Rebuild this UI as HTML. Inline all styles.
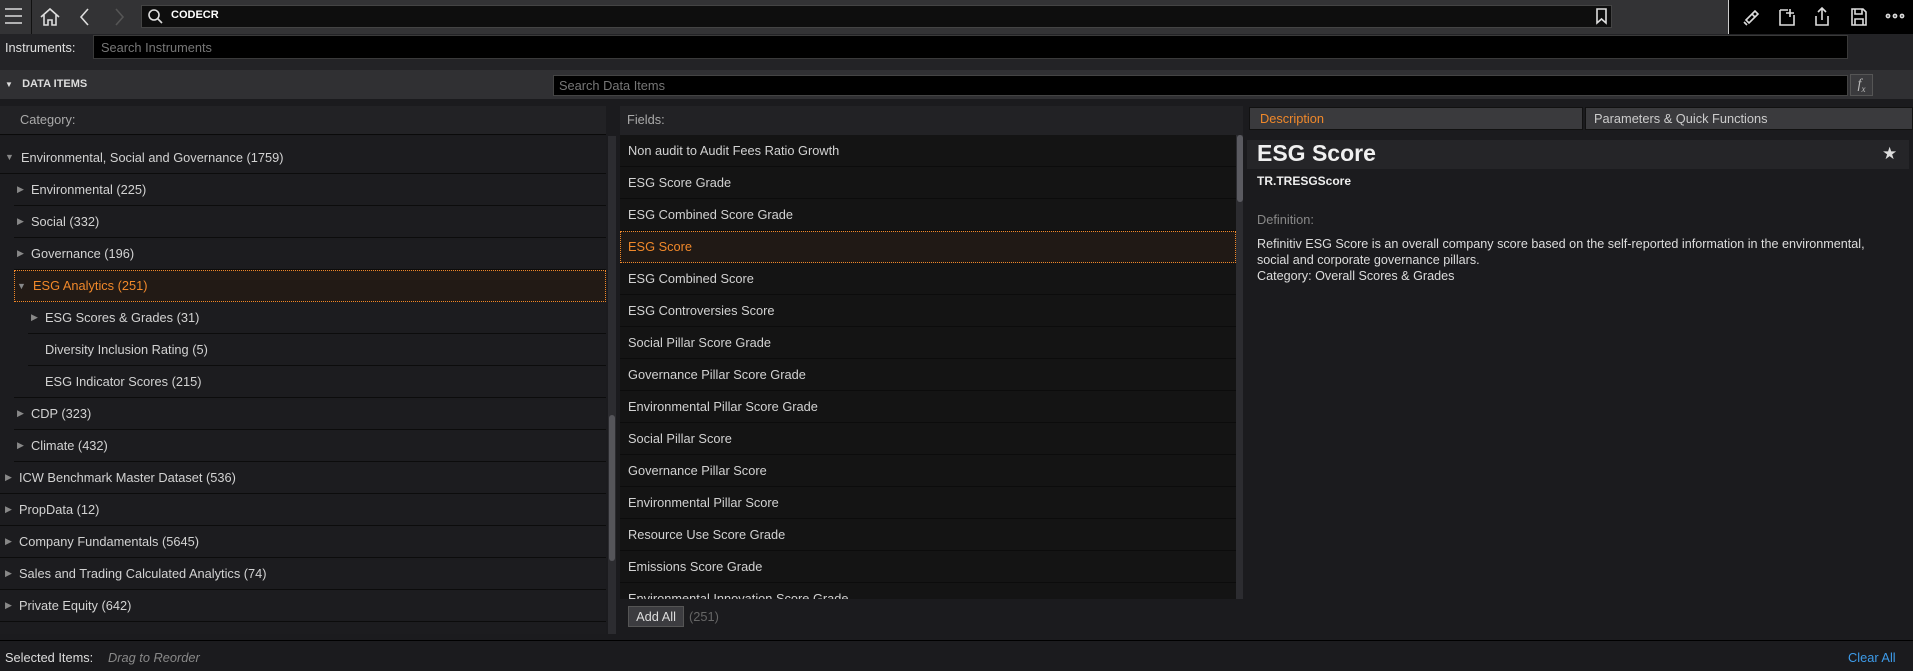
<!DOCTYPE html>
<html><head><meta charset="utf-8"><style>
*{margin:0;padding:0;box-sizing:border-box}
body{width:1913px;height:671px;background:#1b1b1e;font-family:"Liberation Sans",sans-serif;font-size:12.8px;color:#d2d2d2;position:relative;overflow:hidden}
.a{position:absolute}
.row{position:absolute;height:32px;line-height:31px;border-bottom:1px solid #0c0c0c;white-space:nowrap}
.tri{position:absolute;top:0;font-size:9px;color:#888}
.f{left:620px;width:616px;padding-left:8px;background:#141414}
</style></head><body>
<!-- top bar -->
<div class="a" style="left:0;top:0;width:1728px;height:34px;background:#333335"></div>
<div class="a" style="left:1728px;top:0;width:185px;height:34px;background:#000;border-left:1px solid #ccc"></div>
<div class="a" style="left:31px;top:0;width:1px;height:34px;background:#111"></div>
<div class="a" style="left:141px;top:5px;width:1471px;height:23px;background:#0e0e0e;border:1px solid #444"></div>
<div class="a" style="left:171px;top:9px;font-size:11px;font-weight:bold;color:#fff">CODECR</div>
<!-- instruments -->
<div class="a" style="left:0;top:34px;width:1913px;height:36px;background:#232326"></div>
<div class="a" style="left:5px;top:40px;color:#e0e0e0">Instruments:</div>
<div class="a" style="left:93px;top:35px;width:1755px;height:24px;background:#000;border:1px solid #3a3a3a;padding:4px 7px;color:#777">Search Instruments</div>
<!-- data items -->
<div class="a" style="left:0;top:70px;width:1913px;height:29px;background:#303033"></div>
<div class="a" style="left:5px;top:78px;font-size:11px;font-weight:bold;color:#ddd"><span style="font-size:8px">▼</span>&nbsp;&nbsp;&nbsp;DATA ITEMS</div>
<div class="a" style="left:553px;top:75px;width:1295px;height:21px;background:#000;border:1px solid #444;padding:2px 5px;color:#777">Search Data Items</div>
<div class="a" style="left:1850px;top:74px;width:23px;height:22px;background:#3a3a3d;border:1px solid #555;color:#bbb;font-family:'Liberation Serif',serif;font-style:italic;font-size:14px;text-align:center;line-height:20px">f<sub style="font-size:9px">x</sub></div>
<!-- category -->
<div class="a" style="left:0;top:106px;width:606px;height:29px;background:#222225;border-bottom:1px solid #0a0a0a;padding:6px 20px;color:#aaa">Category:</div>
<div class="a" style="left:0;top:136px;width:606px;height:498px;background:#1c1c1f"></div>
<div class="row" style="left:0;top:142px;width:606px"><span class="tri" style="left:5px">▼</span><span style="margin-left:21px">Environmental, Social and Governance (1759)</span></div>
<div class="row" style="left:14px;top:174px;width:592px"><span class="tri" style="left:3px">▶</span><span style="margin-left:17px">Environmental (225)</span></div>
<div class="row" style="left:14px;top:206px;width:592px"><span class="tri" style="left:3px">▶</span><span style="margin-left:17px">Social (332)</span></div>
<div class="row" style="left:14px;top:238px;width:592px"><span class="tri" style="left:3px">▶</span><span style="margin-left:17px">Governance (196)</span></div>
<div class="row" style="left:14px;top:270px;width:592px;background:#221a15;border:1px dotted #f0882a;line-height:30px;color:#f0882a"><span class="tri" style="left:2px">▼</span><span style="margin-left:18px">ESG Analytics (251)</span></div>
<div class="row" style="left:28px;top:302px;width:578px"><span class="tri" style="left:3px">▶</span><span style="margin-left:17px">ESG Scores &amp; Grades (31)</span></div>
<div class="row" style="left:28px;top:334px;width:578px"><span style="margin-left:17px">Diversity Inclusion Rating (5)</span></div>
<div class="row" style="left:14px;top:366px;width:592px"><span style="margin-left:31px">ESG Indicator Scores (215)</span></div>
<div class="row" style="left:14px;top:398px;width:592px"><span class="tri" style="left:3px">▶</span><span style="margin-left:17px">CDP (323)</span></div>
<div class="row" style="left:14px;top:430px;width:592px"><span class="tri" style="left:3px">▶</span><span style="margin-left:17px">Climate (432)</span></div>
<div class="row" style="left:0;top:462px;width:606px"><span class="tri" style="left:5px">▶</span><span style="margin-left:19px">ICW Benchmark Master Dataset (536)</span></div>
<div class="row" style="left:0;top:494px;width:606px"><span class="tri" style="left:5px">▶</span><span style="margin-left:19px">PropData (12)</span></div>
<div class="row" style="left:0;top:526px;width:606px"><span class="tri" style="left:5px">▶</span><span style="margin-left:19px">Company Fundamentals (5645)</span></div>
<div class="row" style="left:0;top:558px;width:606px"><span class="tri" style="left:5px">▶</span><span style="margin-left:19px">Sales and Trading Calculated Analytics (74)</span></div>
<div class="row" style="left:0;top:590px;width:606px"><span class="tri" style="left:5px">▶</span><span style="margin-left:19px">Private Equity (642)</span></div>
<div class="a" style="left:608px;top:136px;width:8px;height:498px;background:#2c2c30"></div>
<div class="a" style="left:609px;top:415px;width:6px;height:146px;background:#55555a;border-radius:3px"></div>
<!-- fields -->
<div class="a" style="left:620px;top:106px;width:623px;height:29px;background:#222225;padding:6px 7px;color:#aaa">Fields:</div>
<div class="a" style="left:620px;top:135px;width:616px;height:464px;background:#141414"></div>
<div class="row f" style="top:135px">Non audit to Audit Fees Ratio Growth</div>
<div class="row f" style="top:167px">ESG Score Grade</div>
<div class="row f" style="top:199px">ESG Combined Score Grade</div>
<div class="row f" style="top:231px;background:#201915;border:1px dotted #f0882a;color:#f0882a;padding-left:7px;line-height:30px">ESG Score</div>
<div class="row f" style="top:263px">ESG Combined Score</div>
<div class="row f" style="top:295px">ESG Controversies Score</div>
<div class="row f" style="top:327px">Social Pillar Score Grade</div>
<div class="row f" style="top:359px">Governance Pillar Score Grade</div>
<div class="row f" style="top:391px">Environmental Pillar Score Grade</div>
<div class="row f" style="top:423px">Social Pillar Score</div>
<div class="row f" style="top:455px">Governance Pillar Score</div>
<div class="row f" style="top:487px">Environmental Pillar Score</div>
<div class="row f" style="top:519px">Resource Use Score Grade</div>
<div class="row f" style="top:551px">Emissions Score Grade</div>
<div class="a" style="left:620px;top:583px;width:616px;height:16px;background:#141414;overflow:hidden"><div style="padding-left:8px;line-height:31px">Environmental Innovation Score Grade</div></div>
<div class="a" style="left:1236px;top:135px;width:7px;height:464px;background:#2c2c30"></div>
<div class="a" style="left:1237px;top:135px;width:6px;height:67px;background:#5a5a60;border-radius:3px"></div>
<div class="a" style="left:628px;top:606px;width:56px;height:21px;background:#3c3c40;border:1px solid #555;color:#ddd;text-align:center;line-height:19px">Add All</div>
<div class="a" style="left:689px;top:609px;color:#666">(251)</div>
<!-- description -->
<div class="a" style="left:1249px;top:107px;width:334px;height:23px;background:#3a3a3d;border:1px solid #111;padding:3px 10px;color:#f0882a">Description</div>
<div class="a" style="left:1585px;top:107px;width:328px;height:23px;background:#3a3a3d;border:1px solid #111;padding:3px 8px;color:#ccc">Parameters &amp; Quick Functions</div>
<div class="a" style="left:1247px;top:140px;width:662px;height:29px;background:#252528"></div>
<div class="a" style="left:1257px;top:140px;font-size:23px;font-weight:bold;color:#f0f0f0">ESG Score</div>
<div class="a" style="left:1882px;top:144px;font-size:17px;color:#ddd">★</div>
<div class="a" style="left:1257px;top:174px;font-size:12px;font-weight:bold;color:#eee">TR.TRESGScore</div>
<div class="a" style="left:1257px;top:212px;color:#888">Definition:</div>
<div class="a" style="left:1257px;top:236px;line-height:16px;font-size:12.6px;color:#ddd">Refinitiv ESG Score is an overall company score based on the self-reported information in the environmental,<br>social and corporate governance pillars.<br>Category: Overall Scores &amp; Grades</div>
<!-- bottom -->
<div class="a" style="left:0;top:640px;width:1913px;height:1px;background:#000"></div>
<div class="a" style="left:5px;top:650px;color:#ddd">Selected Items:</div>
<div class="a" style="left:108px;top:650px;color:#888;font-style:italic">Drag to Reorder</div>
<div class="a" style="left:1848px;top:650px;color:#3d9be9">Clear All</div>
<svg class="a" style="left:0;top:0" width="1913" height="34" fill="none" stroke="#ddd" stroke-width="1.6">
<path d="M5 9h17M5 16h17M5 23h17"/>
<path d="M41 17l9-8 9 8M44 15v10h4v-5h4v5h4V15"/>
<path d="M88 9l-7 8 7 8"/>
<path d="M116 9l7 8-7 8" stroke="#555"/>
<circle cx="154" cy="15" r="5"/><path d="M158 19l4 4"/>
<path d="M1597 9h9v14l-4.5-4-4.5 4z"/>
<path d="M1746 20l6-6 3 3-6 6zM1752 14l3-3 3 3-3 3M1744 22l3 3"/>
<path d="M1780 10h8M1780 10v15h14V15M1790 9v8M1786 13h8"/>
<path d="M1816 16v9h12v-9M1822 8v12M1818 12l4-4 4 4"/>
<path d="M1852 9h11l3 3v13h-14zM1855 9v5h7V9M1855 25v-6h8v6"/>
<circle cx="1888" cy="16" r="1.6"/><circle cx="1895" cy="16" r="1.6"/><circle cx="1902" cy="16" r="1.6"/>
</svg>
</body></html>
